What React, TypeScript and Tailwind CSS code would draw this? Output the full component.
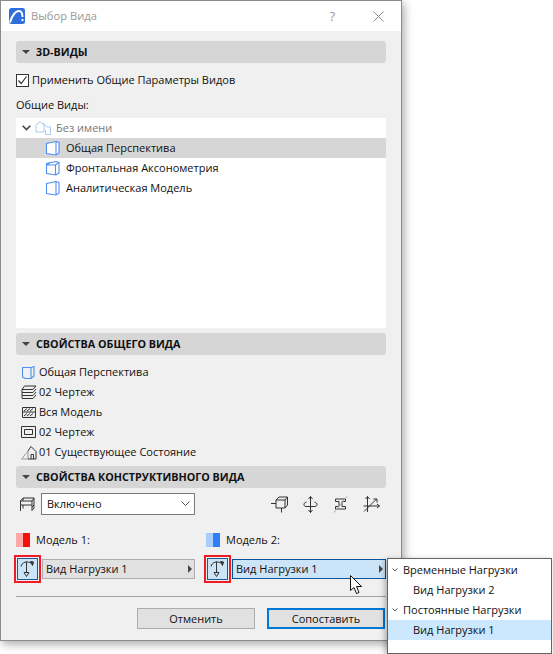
import React from "react";

const BLUE = "#4d90f0";

// Perspective cube (open front) icon
function ViewIcon({ cube = false }: { cube?: boolean }) {
    return (
        <svg width="16" height="16" viewBox="0 0 16 16" fill="none" stroke={BLUE} strokeWidth="1.1">
            <path d="M1.5 3.5 L11 1.5 L14 2.5 V13 L11 15 L1.5 13.5 Z" fill="#fff" />
            <path d={cube ? "M1.5 5 L5 2.5 M1.5 5 L10.5 5 L13.5 2.5 M10.5 5 V15" : "M11 1.5 V15"} />
        </svg>
    );
}

function SectionHeader({ title }: { title: string }) {
    return (
        <div className="flex h-[22px] items-center rounded-[3px] bg-[#d6d6d6] pl-[6px]">
            <div className="h-0 w-0 border-x-[4px] border-t-[4px] border-x-transparent border-t-[#444]" />
            <span className="ml-[6px] text-[10.75px] font-bold text-[#111]">{title}</span>
        </div>
    );
}

function TreeRow({ label, selected, cube }: { label: string; selected?: boolean; cube?: boolean }) {
    return (
        <div className={`flex h-[20px] items-center pl-[29px] ${selected ? "bg-[#d6d6d6]" : ""}`}>
            <ViewIcon cube={cube} />
            <span className="ml-[5px]">{label}</span>
        </div>
    );
}

function PropRow({ icon, label }: { icon: React.ReactNode; label: string }) {
    return (
        <div className="flex h-[20px] items-center pl-[2px]">
            <div className="flex w-[21px] justify-center">{icon}</div>
            <span>{label}</span>
        </div>
    );
}

function LoadIcon() {
    return (
        <svg width="19" height="20" viewBox="0 0 19 20" fill="none" stroke="#333" strokeWidth="1">
            <path d="M3 7.5 C4 3 9 1.5 14 4.5" />
            <path d="M12.5 2.5 L15.5 3 L14.5 6.5 Z" fill="#333" />
            <path d="M8.5 2.5 V14" />
            <path d="M6 13.5 H11 L8.5 17.5 Z" />
        </svg>
    );
}

function LoadButton() {
    return (
        <div className="-ml-[2px] box-border flex h-[28px] w-[27px] items-center justify-center border-[2px] border-[#ee1c25]">
            <div className="flex h-[22px] w-[21px] items-center justify-center border border-[#1c5a8f] bg-[#cce4f7]">
                <LoadIcon />
            </div>
        </div>
    );
}

function ModelRow({ label, light, dark, active }: { label: string; light: string; dark: string; active?: boolean }) {
    return (
        <div className={active ? "w-[180px]" : "w-[179px]"}>
            <div className="flex h-[14px] items-center">
                <div className={`h-[14px] w-[7px] ${light}`} />
                <div className={`h-[14px] w-[7px] ${dark}`} />
                <span className="ml-[6px]">{label}</span>
            </div>
            <div className="mt-[8px] flex items-center">
                <LoadButton />
                <div
                    className={`ml-px flex h-[20px] flex-1 items-center justify-between border pl-[3px] pr-[2px] ${
                        active ? "border-[#005499] bg-[#cce4f7]" : "border-[#adadad] bg-[#e1e1e1]"
                    }`}>
                    <span>Вид Нагрузки 1</span>
                    <div className="h-0 w-0 border-y-[4px] border-l-[4px] border-y-transparent border-l-[#444]" />
                </div>
            </div>
        </div>
    );
}

function SmallChevron() {
    return (
        <svg width="6" height="4" viewBox="0 0 6 4" fill="none" stroke="#555" strokeWidth="1">
            <path d="M0.5 0.5 L3 3 L5.5 0.5" />
        </svg>
    );
}

export default function App() {
    return (
        <div className="relative h-[654px] w-[553px] overflow-hidden bg-white font-['Open_Sans',sans-serif] text-[11px] leading-[12px] text-[#111]">
            {/* Dialog window */}
            <div className="box-border h-[641px] w-[402px] border border-[#8c8c8c] bg-[#f0f0f0] shadow-[2px_3px_9px_rgba(0,0,0,0.35)]">
                {/* Title bar */}
                <div className="flex h-[30px] items-center bg-white pl-[8px] pr-[17px]">
                    <svg width="16" height="16" viewBox="0 0 16 16" fill="none">
                        <rect width="16" height="16" rx="2.5" fill="#2f6fdc" />
                        <path d="M1 14.5 C3 7 7 2.5 10.5 3 C13 3.5 13.5 6 13.5 9" stroke="#fff" strokeWidth="2" />
                        <path d="M12.5 11 H14.5 V13 H12.5 Z" fill="#fff" />
                    </svg>
                    <span className="ml-[6px] text-[11.2px] text-[#999]">Выбор Вида</span>
                    <span className="ml-auto text-[13px] text-[#999]">?</span>
                    <svg className="ml-[38px]" width="11" height="11" viewBox="0 0 11 11" stroke="#8a8a8a" strokeWidth="1">
                        <path d="M0.5 0.5 L10.5 10.5 M10.5 0.5 L0.5 10.5" />
                    </svg>
                </div>

                <div className="px-[15px] pt-[10px]">
                    <SectionHeader title="3D-ВИДЫ" />

                    <div className="mt-[9px] flex h-[16px] items-center">
                        <div className="flex h-[13px] w-[13px] items-center justify-center border border-[#333] bg-white">
                            <svg width="11" height="11" viewBox="0 0 11 11" fill="none" stroke="#333" strokeWidth="1.2">
                                <path d="M1.5 5.5 L4.2 8.5 L9.5 1.5" />
                            </svg>
                        </div>
                        <span className="ml-[3px]">Применить Общие Параметры Видов</span>
                    </div>

                    <div className="mt-[9px] flex h-[16px] items-center">Общие Виды:</div>

                    {/* Views tree */}
                    <div className="mt-[5px] h-[210px] bg-white">
                        <div className="flex h-[20px] items-center pl-[6px]">
                            <svg width="9" height="6" viewBox="0 0 9 6" fill="none" stroke="#444" strokeWidth="1.6">
                                <path d="M0.7 0.7 L4.5 4.5 L8.3 0.7" />
                            </svg>
                            <svg className="ml-[4px]" width="17" height="16" viewBox="0 0 17 16" fill="none" stroke="#a9c8f2" strokeWidth="1">
                                <path d="M1 12 V5 L5 1.5 L9 5 V12 Z" />
                                <path d="M8 3 L12 7 H15.5 V14.5 H10.5 V10" />
                            </svg>
                            <span className="ml-[4px] text-[#777]">Без имени</span>
                        </div>
                        <TreeRow label="Общая Перспектива" selected />
                        <TreeRow label="Фронтальная Аксонометрия" cube />
                        <TreeRow label="Аналитическая Модель" />
                    </div>

                    <div className="mt-[5px]">
                        <SectionHeader title="СВОЙСТВА ОБЩЕГО ВИДА" />
                    </div>

                    {/* General view properties */}
                    <div className="mt-[7px]">
                        <PropRow
                            label="Общая Перспектива"
                            icon={
                                <svg width="13" height="13" viewBox="0 0 13 13" fill="none" stroke={BLUE} strokeWidth="1.1">
                                    <path d="M0.5 1.5 H9 L12 0.5 V10 L9 12.5 H3 L0.5 11 Z M9 1.5 V12.5" />
                                </svg>
                            }
                        />
                        <PropRow
                            label="02 Чертеж"
                            icon={
                                <svg width="16" height="15" viewBox="0 0 16 15" fill="none" stroke="#333" strokeWidth="1">
                                    <path d="M3.5 1 H15 L12 4.5 H1 Z M1 4.5 V7.5 H12 L15 4 M1 7.5 V10.5 H12 L15 7 M1 10.5 V13.5 H12 L15 10" />
                                </svg>
                            }
                        />
                        <PropRow
                            label="Вся Модель"
                            icon={
                                <svg width="14" height="11" viewBox="0 0 14 11" fill="none" stroke="#333" strokeWidth="1">
                                    <path d="M0.5 0.5 H13.5 V10.5 H0.5 Z M2 4 L5 1.5 M5 4 L8 1.5 M8 4 L11 1.5 M0.5 5 H13.5 M2 9 L5 6.5 M5 9 L8 6.5 M8 9 L11 6.5" />
                                </svg>
                            }
                        />
                        <PropRow
                            label="02 Чертеж"
                            icon={
                                <svg width="15" height="12" viewBox="0 0 15 12" fill="none" stroke="#333" strokeWidth="1">
                                    <path d="M0.5 0.5 H14.5 V11.5 H0.5 Z M3.5 3.5 H11.5 V8.5 H3.5 Z" />
                                </svg>
                            }
                        />
                        <PropRow
                            label="01 Существующее Состояние"
                            icon={
                                <svg width="16" height="15" viewBox="0 0 16 15" fill="none" strokeWidth="1">
                                    <path d="M0.5 14 L7 6 V14 Z" stroke="#999" />
                                    <path d="M7 6 L10 1.5 L15 6.5 V14 H7 M10 14 V9.5 H12.5 V14" stroke="#333" />
                                </svg>
                            }
                        />
                    </div>

                    <div className="mt-[4px]">
                        <SectionHeader title="СВОЙСТВА КОНСТРУКТИВНОГО ВИДА" />
                    </div>

                    {/* Structural view toolbar */}
                    <div className="mt-[5px] flex h-[22px] items-center">
                        <svg className="ml-[4px]" width="15" height="15" viewBox="0 0 15 15" fill="none" stroke="#333" strokeWidth="1">
                            <path d="M0.5 14 V4 L3 1 H14 V11 L12 13.5 V4 H0.5 M3 1 V4 M12 4 L14 1 M0.5 8 H12 M3 8 V11.5 M14 8 L12 10" />
                        </svg>
                        <div className="ml-[6px] flex h-[22px] w-[154px] items-center justify-between border border-[#7a7a7a] bg-white pl-[5px] pr-[4px]">
                            <span>Включено</span>
                            <svg width="9" height="6" viewBox="0 0 9 6" fill="none" stroke="#555" strokeWidth="1">
                                <path d="M0.5 0.5 L4.5 4.5 L8.5 0.5" />
                            </svg>
                        </div>
                        <div className="ml-[76px] flex items-center gap-[15px]">
                            <svg width="17" height="17" viewBox="0 0 17 17" fill="none" stroke="#333" strokeWidth="1">
                                <path d="M0 7.5 H5 M10.5 12 V16.5 M5 4 H14 V12 H5 Z M5 4 L8 1 H16.5 V9 L14 12 M14 4 L16.5 1" />
                            </svg>
                            <svg width="15" height="17" viewBox="0 0 15 17" fill="none" stroke="#333" strokeWidth="1">
                                <path d="M7.5 0.5 V16.5 M5.5 3 L7.5 0.5 L9.5 3 M5.5 14 L7.5 16.5 L9.5 14 M3.5 6 C-0.5 7 0.5 11 4 10.5 H11 C14.5 11 15.5 7 11.5 6" />
                            </svg>
                            <svg width="15" height="17" viewBox="0 0 15 17" fill="none" strokeWidth="1">
                                <path d="M2.5 3 H12.5 V5.5 H9 V10.5 H12.5 V13 H2.5 V10.5 H6 V5.5 H2.5 Z" stroke="#333" />
                                <path d="M14 0.5 L1 16.5" stroke="#aaa" />
                            </svg>
                            <svg width="17" height="17" viewBox="0 0 17 17" fill="none" stroke="#333" strokeWidth="1">
                                <path d="M4.5 0.5 V16 M2.5 3 L4.5 0.5 L6.5 3 M0.5 10 H16.5 M14 8 L16.5 10 L14 12 M1 15.5 L13.5 3 M10.5 3 H14 V6.5" />
                            </svg>
                        </div>
                    </div>

                    {/* Models */}
                    <div className="mt-[18px] flex justify-between">
                        <ModelRow label="Модель 1:" light="bg-[#ffa8a8]" dark="bg-[#f60f0f]" />
                        <ModelRow label="Модель 2:" light="bg-[#a9ccff]" dark="bg-[#2f7ef7]" active />
                    </div>

                    <div className="mt-[13px] h-px bg-[#a0a0a0]" />

                    {/* Dialog actions */}
                    <div className="mt-[11px] flex justify-end gap-[12px] pr-px">
                        <div className="box-border flex h-[21px] w-[118px] items-center justify-center border border-[#adadad] bg-[#e1e1e1]">
                            Отменить
                        </div>
                        <div className="box-border flex h-[21px] w-[118px] items-center justify-center border-[2px] border-[#0078d7] bg-[#e1e1e1]">
                            Сопоставить
                        </div>
                    </div>
                </div>
            </div>

            {/* Cursor over the active load view */}
            <svg className="absolute left-[350px] top-[575px]" width="13" height="20" viewBox="0 0 13 20">
                <path d="M0.5 0.5 V15.5 L4 12.5 L6.5 18.5 L9 17.5 L6.5 11.5 H11.5 Z" fill="#fff" stroke="#111" strokeWidth="1" />
            </svg>

            {/* Load view popup menu */}
            <div className="absolute left-[387px] top-[558px] box-border h-[96px] w-[165px] border border-[#646464] bg-white py-px shadow-[-2px_2px_6px_rgba(0,0,0,0.3)]">
                <div className="flex h-[20px] items-center pl-[4px]">
                    <SmallChevron />
                    <span className="ml-[5px]">Временные Нагрузки</span>
                </div>
                <div className="flex h-[20px] items-center pl-[25px]">Вид Нагрузки 2</div>
                <div className="flex h-[20px] items-center pl-[4px]">
                    <SmallChevron />
                    <span className="ml-[5px]">Постоянные Нагрузки</span>
                </div>
                <div className="flex h-[20px] items-center bg-[#cce8ff] pl-[25px]">Вид Нагрузки 1</div>
            </div>
        </div>
    );
}
